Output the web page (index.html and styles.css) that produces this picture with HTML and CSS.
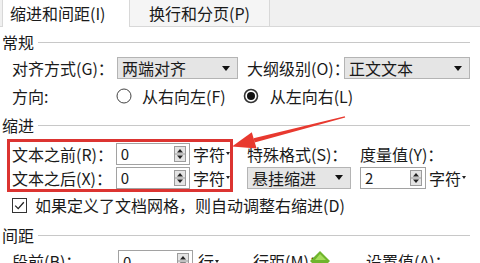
FILE: index.html
```html
<!DOCTYPE html>
<html lang="zh-CN">
<head>
    <meta charset="UTF-8">
    <meta name="viewport" content="width=device-width, initial-scale=1.0">
    <title>段落</title>
    <link rel="stylesheet" href="styles.css">
</head>
<body>
    <div class="dialog">
        <div class="tabs">
            <div class="tab tab-active">缩进和间距(I)</div>
            <div class="tab tab-other">换行和分页(P)</div>
        </div>

        <!-- 常规 -->
        <div class="group-title first"><span>常规</span><i class="rule"></i></div>
        <div class="row row-general">
            <span class="lbl lbl-left">对齐方式(G)：</span>
            <div class="select sel-align">两端对齐<b class="caret"></b></div>
            <span class="lbl lbl-level">大纲级别(O)：</span>
            <div class="select sel-level">正文文本<b class="caret"></b></div>
        </div>
        <div class="row row-dir">
            <span class="lbl lbl-dir">方向:</span>
            <svg class="radio" width="16" height="16" viewBox="0 0 16 16"><circle cx="8" cy="8" r="7" fill="#fff" stroke="#444" stroke-width="1"/></svg>
            <span class="radio-text">从右向左(F)</span>
            <svg class="radio radio-second" width="16" height="16" viewBox="0 0 16 16"><circle cx="8" cy="8" r="6.5" fill="#fff" stroke="#333" stroke-width="1.6"/><circle cx="8" cy="8" r="4" fill="#111"/></svg>
            <span class="radio-text">从左向右(L)</span>
        </div>

        <!-- 缩进 -->
        <div class="group-title indent-title"><span>缩进</span><i class="rule"></i></div>
        <div class="indent">
            <div class="mark-box">
                <div class="irow">
                    <span class="lbl lbl-box">文本之前(R)：</span>
                    <div class="spin spin-wide">0
                        <svg class="spinner" width="12" height="16" viewBox="0 0 12 16"><rect x="0.5" y="0.5" width="11" height="15" fill="#e4e4e4" stroke="#9c9c9c"/><line x1="1" y1="8" x2="11" y2="8" stroke="#9c9c9c"/><path d="M3 6.5 L6 3 L9 6.5 Z" fill="#222"/><path d="M3 9.5 L6 13 L9 9.5 Z" fill="#222"/></svg>
                    </div>
                    <span class="unit">字符<b class="mini-caret"></b></span>
                </div>
                <div class="irow">
                    <span class="lbl lbl-box">文本之后(X)：</span>
                    <div class="spin spin-wide">0
                        <svg class="spinner" width="12" height="16" viewBox="0 0 12 16"><rect x="0.5" y="0.5" width="11" height="15" fill="#e4e4e4" stroke="#9c9c9c"/><line x1="1" y1="8" x2="11" y2="8" stroke="#9c9c9c"/><path d="M3 6.5 L6 3 L9 6.5 Z" fill="#222"/><path d="M3 9.5 L6 13 L9 9.5 Z" fill="#222"/></svg>
                    </div>
                    <span class="unit">字符<b class="mini-caret"></b></span>
                </div>
            </div>
            <div class="special">
                <div class="irow">
                    <span class="lbl lbl-special">特殊格式(S)：</span>
                    <span class="lbl">度量值(Y)：</span>
                </div>
                <div class="irow">
                    <div class="select sel-special">悬挂缩进<b class="caret"></b></div>
                    <div class="spin spin-narrow">2
                        <svg class="spinner" width="12" height="16" viewBox="0 0 12 16"><rect x="0.5" y="0.5" width="11" height="15" fill="#e4e4e4" stroke="#9c9c9c"/><line x1="1" y1="8" x2="11" y2="8" stroke="#9c9c9c"/><path d="M3 6.5 L6 3 L9 6.5 Z" fill="#222"/><path d="M3 9.5 L6 13 L9 9.5 Z" fill="#222"/></svg>
                    </div>
                    <span class="unit">字符<b class="mini-caret"></b></span>
                </div>
            </div>
        </div>
        <div class="row row-check">
            <svg class="check" width="15" height="15" viewBox="0 0 15 15"><rect x="0.5" y="0.5" width="14" height="14" fill="#fff" stroke="#333"/><path d="M3.2 7.6 L6.2 10.6 L11.8 4.2" fill="none" stroke="#222" stroke-width="1.3"/></svg>
            <span>如果定义了文档网格，则自动调整右缩进(D)</span>
        </div>

        <!-- 间距 -->
        <div class="group-title spacing-title"><span>间距</span><i class="rule"></i></div>
        <div class="row row-spacing">
            <span class="lbl lbl-before">段前(B)：</span>
            <div class="spin spin-wide">0
                <svg class="spinner" width="12" height="16" viewBox="0 0 12 16"><rect x="0.5" y="0.5" width="11" height="15" fill="#e4e4e4" stroke="#9c9c9c"/><line x1="1" y1="8" x2="11" y2="8" stroke="#9c9c9c"/><path d="M3 6.5 L6 3 L9 6.5 Z" fill="#222"/><path d="M3 9.5 L6 13 L9 9.5 Z" fill="#222"/></svg>
            </div>
            <span class="unit unit-line">行<b class="mini-caret"></b></span>
            <span class="lbl lbl-linesp">行距(M)：</span>
            <span class="lbl">设置值(A)：</span>
        </div>

        <!-- overlays: cursor marker and the red arrow -->
        <svg class="cursor-mark" width="22" height="14" viewBox="0 0 22 14"><path d="M11 0 L21 10 L11 20 L1 10 Z" fill="#6fb52c"/><path d="M11 3 L17 9 L11 9 L6 9 Z" fill="#a6dd5c"/></svg>
        <svg class="arrow" width="480" height="263" viewBox="0 0 480 263">
            <polygon points="345.2,117.6 344.8,116.2 253.6,138.2 254.6,142.4" fill="#e8392f"/>
            <polygon points="232,146.5 251.8,132.2 256.6,148.6" fill="#e8392f"/>
        </svg>
    </div>
</body>
</html>
```

FILE: styles.css
```css
body {
    margin: 0;
    background-color: #ffffff;
    font-family: "Noto Sans CJK SC", "Noto Sans", sans-serif;
    font-size: 16px;
    color: #1a1a1a;
}

.dialog {
    position: relative;
    width: 480px;
    height: 263px;
    overflow: hidden;
    background-color: #ffffff;
}

/* tab strip */
.tabs {
    display: flex;
    height: 26px;
    background-color: #f0f0f0;
    border-bottom: 1px solid #d8d8d8;
}

.tab {
    line-height: 26px;
    white-space: nowrap;
}

.tab-active {
    width: 119px;
    margin-left: 2px;
    padding-left: 7px;
    background-color: #ffffff;
    border-left: 1px solid #d8d8d8;
    border-right: 1px solid #d8d8d8;
    margin-bottom: -1px;
    line-height: 27px;
}

.tab-other {
    width: 120px;
    padding-left: 19px;
    background-color: #f5f5f5;
    border-right: 1px solid #d8d8d8;
}

/* group headings with the line after them */
.group-title {
    display: flex;
    align-items: center;
    height: 20px;
    padding-left: 2px;
    gap: 4px;
}

.group-title.first {
    margin-top: 5px;
}

.indent-title {
    margin-top: 9px;
}

.spacing-title {
    margin-top: 10px;
}

.rule {
    flex: 1;
    height: 1px;
    margin-right: 10px;
    background-color: #c8c8c8;
}

.row {
    display: flex;
    align-items: center;
    padding-left: 12px;
    white-space: nowrap;
}

.row-general {
    height: 22px;
    margin-top: 5px;
}

.row-dir {
    height: 20px;
    margin-top: 7px;
}

.lbl {
    white-space: nowrap;
}

.lbl-left {
    width: 105px;
}

.lbl-level {
    width: 97px;
    margin-left: 9px;
}

.lbl-dir {
    width: 104px;
}

/* drop-down boxes */
.select {
    display: flex;
    align-items: center;
    box-sizing: border-box;
    height: 22px;
    padding-left: 4px;
    background-color: #e5e5e5;
    border: 1px solid #b4b4b4;
}

.sel-align {
    width: 121px;
}

.sel-level {
    width: 126px;
}

.sel-special {
    width: 104px;
    margin-right: 9px;
}

.caret {
    margin-left: auto;
    margin-right: 7px;
    width: 0;
    height: 0;
    border-left: 4px solid transparent;
    border-right: 4px solid transparent;
    border-top: 5px solid #111;
}

/* radio buttons */
.radio {
    margin-right: 10px;
}

.radio-second {
    margin-left: 17px;
    margin-right: 11px;
}

/* indent block */
.indent {
    display: flex;
    margin-top: 4px;
}

.mark-box {
    box-sizing: border-box;
    width: 226px;
    margin-left: 7px;
    border: 3px solid #dc3431;
    display: flex;
    flex-direction: column;
    gap: 1px;
}

.irow {
    display: flex;
    align-items: center;
    height: 23px;
    white-space: nowrap;
}

.mark-box .irow {
    padding-left: 2px;
}

.lbl-box {
    width: 105px;
}

.special {
    display: flex;
    flex-direction: column;
    gap: 1px;
    margin-left: 14px;
    padding-top: 3px;
}

.lbl-special {
    width: 113px;
}

/* number fields with the up/down buttons */
.spin {
    display: flex;
    align-items: center;
    box-sizing: border-box;
    height: 22px;
    padding-left: 4px;
    background-color: #ffffff;
    border: 1px solid #a2a2a2;
    font-size: 15px;
}

.spin-wide {
    width: 75px;
}

.spin-narrow {
    width: 66px;
}

.spinner {
    margin-left: auto;
    margin-right: 3px;
}

.unit {
    display: flex;
    align-items: center;
    margin-left: 3px;
}

.mini-caret {
    margin-left: 1px;
    width: 0;
    height: 0;
    border-left: 2px solid transparent;
    border-right: 2px solid transparent;
    border-top: 3px solid #222;
}

/* checkbox row */
.row-check {
    height: 20px;
    margin-top: 3px;
}

.check {
    margin-right: 8px;
}

/* spacing row (cut off by the window) */
.row-spacing {
    height: 22px;
    margin-top: 5px;
}

.lbl-before {
    width: 106px;
}

.unit-line {
    margin-left: 5px;
}

.lbl-linesp {
    width: 113px;
    margin-left: 34px;
}

.cursor-mark {
    position: absolute;
    left: 309px;
    top: 251px;
}

.arrow {
    position: absolute;
    left: 0;
    top: 0;
    pointer-events: none;
}
```
